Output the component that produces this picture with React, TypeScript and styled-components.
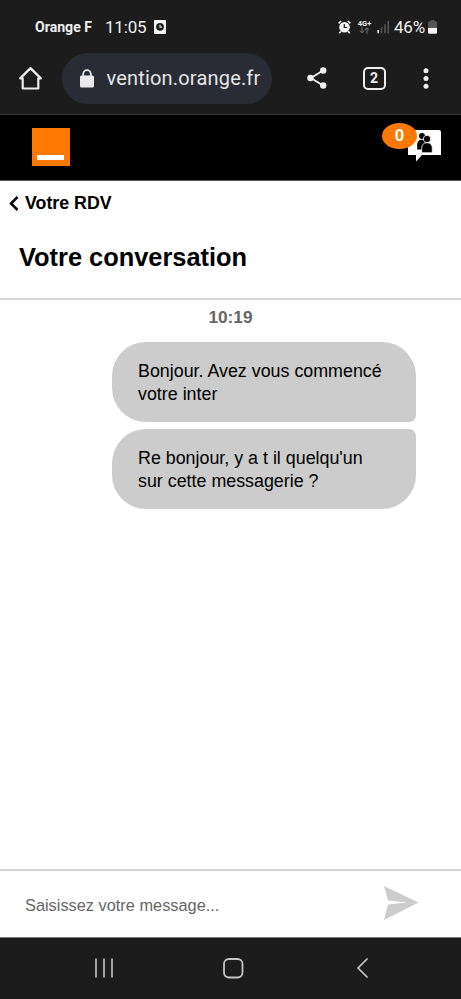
import React from "react";
import styled, { createGlobalStyle } from "styled-components";

const GlobalStyle = createGlobalStyle`
  * { box-sizing: border-box; }
  html, body { margin: 0; padding: 0; background: #fff; }
  body { overflow: hidden; }
  svg { display: block; flex: none; }
`;

const Screen = styled.div`
  width: 461px;
  height: 999px;
  display: flex;
  flex-direction: column;
  background: #fff;
  color: #000;
  font-family: "Liberation Sans", Arial, sans-serif;
`;

const BrowserChrome = styled.div`
  height: 115px;
  flex: none;
  background: #1c1c1c;
  border-bottom: 1px solid #343434;
  color: #efefef;
  font-family: Roboto, sans-serif;
`;

const StatusBar = styled.div`
  display: flex;
  align-items: center;
  height: 52px;
  padding: 2px 24px 0 35px;
`;

const Carrier = styled.span`
  width: 70px;
  font: 700 14.1px/20px Roboto, sans-serif;
  white-space: nowrap;
`;

const StatusText = styled.span<{ $width: number; $spacing?: number }>`
  width: ${(p) => p.$width}px;
  font-size: 17px;
  line-height: 20px;
  letter-spacing: ${(p) => p.$spacing ?? 0}px;
  white-space: nowrap;
`;

const StatusIcons = styled.div`
  display: flex;
  align-items: center;
  margin-left: auto;
`;

const NetworkBadge = styled.div`
  display: flex;
  flex-direction: column;
  align-items: center;
  width: 15px;
  margin: 0 5px 0 6px;
  font: 700 7.5px/7px Roboto, sans-serif;
`;

const Toolbar = styled.div`
  display: flex;
  align-items: center;
  height: 52px;
  padding: 0 15px 0 18px;
`;

const AddressPill = styled.div`
  display: flex;
  align-items: center;
  width: 210px;
  height: 51px;
  margin: 0 35px 0 18.500px;
  padding-left: 18px;
  border-radius: 26px;
  background: #292c34;
`;

const Address = styled.span`
  margin-left: 13px;
  font-size: 20px;
  line-height: 26px;
  letter-spacing: 0.18px;
  color: #e4e5e8;
  white-space: nowrap;
`;

const TabCount = styled.div`
  display: flex;
  align-items: center;
  justify-content: center;
  width: 23px;
  height: 23px;
  margin: 0 37px 0 36px;
  border: 2px solid #eee;
  border-radius: 5px;
  font: 700 14px/19px Roboto, sans-serif;
`;

const SiteHeader = styled.header`
  display: flex;
  justify-content: space-between;
  height: 66px;
  flex: none;
  padding: 13px 20px 0 32px;
  background: #000;
  border-bottom: 1px solid #555;
`;

const Logo = styled.div`
  display: flex;
  align-items: flex-end;
  width: 38px;
  height: 38px;
  padding: 0 5px 6px;
  background: #ff7900;
`;

const LogoBar = styled.div`
  width: 27px;
  height: 5px;
  background: #fff;
`;

const Notification = styled.div`
  position: relative;
  width: 33px;
  height: 35px;
  margin-top: 2px;
`;

const Count = styled.span`
  position: absolute;
  left: -26px;
  top: -7px;
  width: 35px;
  height: 26px;
  border-radius: 50%;
  background: #ff7900;
  color: #fff;
  font-size: 17px;
  font-weight: 700;
  line-height: 25px;
  text-align: center;
`;

const TitleBlock = styled.div`
  height: 119px;
  flex: none;
  border-bottom: 2px solid #d6d6d6;
`;

const BackLink = styled.div`
  display: flex;
  align-items: center;
  height: 45px;
  padding-left: 9px;
  font-size: 17.8px;
  font-weight: 700;
`;

const BackLabel = styled.span`
  margin-left: 6px;
`;

const Title = styled.h1`
  margin: 14px 0 0 19px;
  font-size: 25.4px;
  line-height: 34px;
`;

const Conversation = styled.main`
  display: flex;
  flex-direction: column;
  align-items: flex-end;
  gap: 7px;
  height: 569px;
  padding: 8px 45px 0 0;
`;

const Timestamp = styled.div`
  align-self: stretch;
  height: 27px;
  margin-right: -45px;
  color: #666;
  font-size: 17.3px;
  font-weight: 700;
  line-height: 19px;
  text-align: center;
`;

const Bubble = styled.div<{ $last?: boolean }>`
  width: 304px;
  height: 80px;
  flex: none;
  padding: 18px 20px 0 26px;
  border-radius: ${(p) => (p.$last ? "34px 7px 34px 34px" : "34px 34px 7px 34px")};
  background: #ccc;
  font-size: 17.85px;
  line-height: 23px;
  white-space: pre-line;
`;

const Composer = styled.div`
  display: flex;
  justify-content: space-between;
  height: 68px;
  flex: none;
  padding: 14px 42px 0 25px;
  border-top: 2px solid #d2d2d2;
`;

const Placeholder = styled.span`
  margin-top: 8px;
  color: #666;
  font-size: 16.35px;
  line-height: 24px;
`;

const NavigationBar = styled.nav`
  display: flex;
  align-items: center;
  height: 62px;
  flex: none;
  padding: 0 0 1px 94px;
  background: #1c1c1c;
  border-top: 1px solid #777;
`;

const NavButton = styled.div`
  width: 129px;
`;

const RecordIcon = () => (
  <svg width="12" height="14" viewBox="0 0 12 14">
    <rect width="12" height="14" rx="0.7" fill="#f4f4f4" />
    <circle cx="6" cy="6.8" r="3.9" fill="#1c1c1c" />
    <path d="M6 4.8v2.3h2" fill="none" stroke="#eee" strokeWidth="1.1" />
  </svg>
);

const AlarmIcon = () => (
  <svg width="13" height="14" viewBox="0 0 13 14">
    <path d="M.6 3.4 3.2 1M9.8 1l2.6 2.4M2.9 11.3l-1.6 1.9M10.1 11.3l1.6 1.9" stroke="#f4f4f4" strokeWidth="1.6" />
    <circle cx="6.5" cy="7.2" r="5.3" fill="#f4f4f4" />
    <path d="M6.3 4.1v3.4h3" fill="none" stroke="#1c1c1c" strokeWidth="1.2" />
  </svg>
);

const DataArrows = () => (
  <svg width="11" height="7" viewBox="0 0 11 7" fill="none" stroke="#777" strokeWidth="1">
    <path d="M3 0v5.6M.8 3.6 3 5.8l2.2-2.2M8 6.5V1M5.8 3 8 .8 10.2 3" />
  </svg>
);

const SignalIcon = () => (
  <svg width="17" height="14" viewBox="0 0 17 14">
    <path d="M1.2 10v3.3" stroke="#eee" strokeWidth="1.7" />
    <path d="M4.5 7.3v6M8 4.3v9M11.3 1v12.3" stroke="#555" strokeWidth="1.6" />
  </svg>
);

const BatteryIcon = () => (
  <svg width="9" height="14" viewBox="0 0 10 14" preserveAspectRatio="none">
    <path d="M3 0h4v1.3h1.5Q10 1.5 10 3v5H0V3q0-1.5 1.5-1.7H3Z" fill="#555" />
    <path d="M0 8h10v4.5q0 1.3-1.3 1.3H1.3Q0 13.8 0 12.5Z" fill="#f4f4f4" />
  </svg>
);

const HomeIcon = () => (
  <svg width="25" height="25" viewBox="0 0 25 25" fill="none" stroke="#eee" strokeWidth="2.2" strokeLinejoin="round" strokeLinecap="round">
    <path d="M4.7 12.4H2.2L12.5 2.1 22.8 12.4H20.3V22.5H4.7Z" />
  </svg>
);

const LockIcon = () => (
  <svg width="14" height="19" viewBox="0 0 14 19">
    <path d="M3.2 8V5a3.8 3.8 0 0 1 7.6 0v3" fill="none" stroke="#e9e9eb" strokeWidth="1.8" />
    <rect y="6.5" width="14" height="12" rx="1.5" fill="#e9e9eb" />
  </svg>
);

const ShareIcon = () => (
  <svg width="20" height="22" viewBox="0 0 20 22" fill="#eee">
    <path d="M16 3.5 4 11l12 7.5" fill="none" stroke="#eee" strokeWidth="1.9" />
    <circle cx="16.2" cy="3.5" r="3.2" />
    <circle cx="3.4" cy="11" r="3.2" />
    <circle cx="16.2" cy="18.500" r="3.2" />
  </svg>
);

const MenuDots = () => (
  <svg width="6" height="21" viewBox="0 0 6 21" fill="#eee">
    <circle cx="3" cy="2.7" r="2.5" />
    <circle cx="3" cy="10.5" r="2.5" />
    <circle cx="3" cy="18.3" r="2.5" />
  </svg>
);

const GroupChatIcon = () => (
  <svg width="33" height="35" viewBox="0 0 33 35">
    <path d="M2 0H31Q33 0 33 2V25H14L8 31.5V25H0V2Z" fill="#fff" />
    <circle cx="14" cy="6" r="3" fill="#000" />
    <path d="M9.2 19.5V14.5Q9.2 9.7 14 9.7 18 9.7 18 14v5.5Z" fill="#000" />
    <circle cx="19" cy="9" r="3.7" fill="#000" stroke="#fff" strokeWidth=".8" />
    <path d="M13.7 22.8V18.5Q13.7 12.7 19 12.7T24.3 18.5V22.8Z" fill="#000" stroke="#fff" strokeWidth=".8" />
  </svg>
);

const BackChevron = () => (
  <svg width="10" height="15" viewBox="0 0 10 15">
    <path d="M8.5 1 2 7.5 8.5 14" fill="none" stroke="#000" strokeWidth="2.5" />
  </svg>
);

const SendIcon = () => (
  <svg width="36" height="36" viewBox="0 0 36 36">
    <path d="M1 1 35.5 17.5 1 35 5 19.5 24 17.5 5 15.5Z" fill="#ccc" />
  </svg>
);

const RecentIcon = () => (
  <svg width="20" height="22" viewBox="0 0 20 22">
    <path d="M2 1.5v19M10 1.5v19M18 1.5v19" stroke="#bdbdbd" strokeWidth="1.7" />
  </svg>
);

const NavHomeIcon = () => (
  <svg width="21" height="21" viewBox="0 0 21 21">
    <rect x="1" y="1" width="18.500" height="18.500" rx="5" fill="none" stroke="#c6c6c6" strokeWidth="1.8" />
  </svg>
);

const NavBackIcon = () => (
  <svg width="22" height="22" viewBox="0 0 22 22">
    <path d="M15.5 1.5 6 11 15.5 20.5" fill="none" stroke="#c6c6c6" strokeWidth="1.7" />
  </svg>
);

export default function App() {
  return (
    <>
      <GlobalStyle />
      <Screen>
        <BrowserChrome>
          <StatusBar>
            <Carrier>Orange F</Carrier>
            <StatusText $width={49} $spacing={-0.2}>11:05</StatusText>
            <RecordIcon />
            <StatusIcons>
              <AlarmIcon />
              <NetworkBadge>
                4G+
                <DataArrows />
              </NetworkBadge>
              <SignalIcon />
              <StatusText $width={34} $spacing={-0.2}>46%</StatusText>
              <BatteryIcon />
            </StatusIcons>
          </StatusBar>
          <Toolbar>
            <HomeIcon />
            <AddressPill>
              <LockIcon />
              <Address>vention.orange.fr</Address>
            </AddressPill>
            <ShareIcon />
            <TabCount>2</TabCount>
            <MenuDots />
          </Toolbar>
        </BrowserChrome>
        <SiteHeader>
          <Logo>
            <LogoBar />
          </Logo>
          <Notification>
            <GroupChatIcon />
            <Count>0</Count>
          </Notification>
        </SiteHeader>
        <TitleBlock>
          <BackLink>
            <BackChevron />
            <BackLabel>Votre RDV</BackLabel>
          </BackLink>
          <Title>Votre conversation</Title>
        </TitleBlock>
        <Conversation>
          <Timestamp>10:19</Timestamp>
          <Bubble>{"Bonjour. Avez vous commencé\nvotre inter"}</Bubble>
          <Bubble $last>{"Re bonjour, y a t il quelqu'un\nsur cette messagerie ?"}</Bubble>
        </Conversation>
        <Composer>
          <Placeholder>Saisissez votre message...</Placeholder>
          <SendIcon />
        </Composer>
        <NavigationBar>
          <NavButton>
            <RecentIcon />
          </NavButton>
          <NavButton>
            <NavHomeIcon />
          </NavButton>
          <NavBackIcon />
        </NavigationBar>
      </Screen>
    </>
  );
}
